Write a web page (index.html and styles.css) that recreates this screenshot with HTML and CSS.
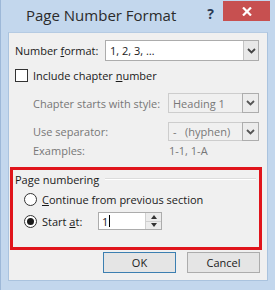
FILE: index.html
```html
<!DOCTYPE html>
<html lang="en">
<head>
    <meta charset="UTF-8">
    <meta name="viewport" content="width=device-width, initial-scale=1.0">
    <title>Page Number Format</title>
    <link rel="stylesheet" href="styles.css">
</head>
<body>
    <div class="window">
        <div class="titlebar">
            <span class="title">Page Number Format</span>
            <span class="help">?</span>
            <span class="close">
                <svg width="10" height="9" viewBox="0 0 10 9"><path d="M1 0.5 L9 8.5 M9 0.5 L1 8.5" stroke="#fff" stroke-width="2.2"/></svg>
            </span>
        </div>
        <div class="dialog">
            <div class="row row-format">
                <span class="label label-format">Number <u>f</u>ormat:</span>
                <div class="combo">
                    <span class="combo-value">1, 2, 3, …</span>
                    <span class="combo-btn">
                        <svg width="9" height="6" viewBox="0 0 9 6"><path d="M1 1 L4.5 4.5 L8 1" stroke="#444" stroke-width="1.8" fill="none"/></svg>
                    </span>
                </div>
            </div>

            <div class="row row-check">
                <span class="checkbox"></span>
                <span>Include chapter <u>n</u>umber</span>
            </div>

            <div class="row row-sub row-chapter">
                <span class="label label-sub">Chapter starts with style:</span>
                <div class="combo combo-disabled">
                    <span class="combo-value">Heading 1</span>
                    <span class="combo-btn">
                        <svg width="9" height="6" viewBox="0 0 9 6"><path d="M1 1 L4.5 4.5 L8 1" stroke="#555" stroke-width="1.8" fill="none"/></svg>
                    </span>
                </div>
            </div>

            <div class="row row-sub row-sep">
                <span class="label label-sub">Use separator:</span>
                <div class="combo combo-disabled">
                    <span class="combo-value">-&nbsp;&nbsp;&nbsp;(hyphen)</span>
                    <span class="combo-btn">
                        <svg width="9" height="6" viewBox="0 0 9 6"><path d="M1 1 L4.5 4.5 L8 1" stroke="#555" stroke-width="1.8" fill="none"/></svg>
                    </span>
                </div>
            </div>

            <div class="row row-sub row-examples">
                <span class="label label-sub">Examples:</span>
                <span class="muted">1-1, 1-A</span>
            </div>

            <div class="group">
                <div class="legend">
                    <span>Page numbering</span>
                    <span class="legend-line"></span>
                </div>
                <div class="radio-row">
                    <span class="radio"></span>
                    <span><u>C</u>ontinue from previous section</span>
                </div>
                <div class="radio-row">
                    <span class="radio radio-on"><span class="dot"></span></span>
                    <span class="radio-label">Start <u>a</u>t:</span>
                    <div class="spin">
                        <span class="spin-value">1<span class="caret"></span></span>
                        <span class="spin-btns">
                            <span class="spin-up"></span>
                            <span class="spin-down"></span>
                        </span>
                    </div>
                </div>
            </div>

            <div class="buttons">
                <button class="btn btn-default">OK</button>
                <button class="btn">Cancel</button>
            </div>
        </div>
    </div>
</body>
</html>
```

FILE: styles.css
```css
/* dialog window */
body {
    margin: 0;
    padding: 0;
    font-family: "Open Sans", "Noto Sans", sans-serif;
    font-size: 11px;
    color: #1a1a1a;
}

.window {
    width: 275px;
    height: 290px;
    box-sizing: border-box;
    background-color: #c3d7ed;
    border-left: 1px solid #9db8d8;
    display: flex;
    flex-direction: column;
}

u {
    text-decoration: underline;
    text-underline-offset: 1px;
}

/* title bar */
.titlebar {
    height: 32px;
    display: flex;
    align-items: flex-start;
    position: relative;
}

.title {
    margin-left: 25px;
    margin-top: 5px;
    font-size: 15px;
    color: #2b2b2b;
}

.help {
    margin-left: auto;
    margin-top: 4px;
    font-size: 14px;
    font-weight: bold;
    color: #2a3b55;
}

.close {
    width: 47px;
    height: 20px;
    margin-left: 9px;
    margin-top: 1px;
    margin-right: 5px;
    background-color: #c75050;
    display: flex;
    align-items: center;
    justify-content: center;
}

/* dialog body */
.dialog {
    margin: 0 7px 9px 7px;
    flex: 1;
    background-color: #f0f0f0;
    border: 1px solid #aac3de;
    border-top-color: #b5cbe3;
    display: flex;
    flex-direction: column;
}

.row {
    display: flex;
    align-items: center;
    padding: 0 8px 0 6px;
}

.row-format {
    margin-top: 7px;
    height: 21px;
}

.label-format {
    width: 90px;
}

.row-check {
    margin-top: 6px;
    height: 17px;
    gap: 5px;
}

.row-sub {
    padding-left: 24px;
}

.label-sub {
    width: 136px;
    color: #777;
}

.muted {
    color: #777;
}

.row-chapter {
    margin-top: 9px;
    height: 20px;
}

.row-sep {
    margin-top: 9px;
    height: 19px;
}

.row-examples {
    height: 18px;
}

/* combo boxes */
.combo {
    flex: 1;
    height: 100%;
    box-sizing: border-box;
    border: 1px solid #acacac;
    background-color: #fff;
    display: flex;
    align-items: center;
}

.combo-value {
    flex: 1;
    padding-left: 4px;
}

.combo-btn {
    width: 15px;
    height: 100%;
    box-sizing: border-box;
    background-color: #e8e8e8;
    border-left: 1px solid #c4c4c4;
    display: flex;
    align-items: center;
    justify-content: center;
}

.combo-disabled {
    flex: none;
    width: 91px;
    background-color: #f0f0f0;
    border-color: #cdcdcd;
    color: #777;
}

.combo-disabled .combo-btn {
    border: 1px solid #adadad;
    margin-right: -1px;
    height: calc(100% + 2px);
    width: 17px;
    background-color: #ececec;
}

.checkbox {
    width: 13px;
    height: 13px;
    box-sizing: border-box;
    border: 1px solid #333;
    background-color: #fff;
}

/* page numbering group (highlighted) */
.group {
    margin: 8px 5px 0 1px;
    height: 83px;
    box-sizing: border-box;
    border: 3px solid #e0141b;
    padding: 1px 3px 0 2px;
    display: flex;
    flex-direction: column;
}

.legend {
    height: 16px;
    display: flex;
    align-items: center;
    gap: 6px;
}

.legend-line {
    flex: 1;
    height: 1px;
    background-color: #dcdcdc;
    border-bottom: 1px solid #fff;
}

.radio-row {
    margin-top: 2px;
    height: 20px;
    padding-left: 9px;
    display: flex;
    align-items: center;
    gap: 5px;
}

.radio {
    width: 13px;
    height: 13px;
    box-sizing: border-box;
    border: 1px solid #333;
    border-radius: 50%;
    background-color: #fff;
    display: flex;
    align-items: center;
    justify-content: center;
}

.dot {
    width: 7px;
    height: 7px;
    border-radius: 50%;
    background-color: #1a1a1a;
}

.radio-label {
    width: 51px;
}

.spin {
    width: 64px;
    height: 18px;
    box-sizing: border-box;
    border: 1px solid #acacac;
    background-color: #fff;
    display: flex;
}

.spin-value {
    flex: 1;
    padding-left: 3px;
    display: flex;
    align-items: center;
}

.caret {
    width: 1px;
    height: 12px;
    background-color: #000;
    margin-left: 1px;
}

.spin-btns {
    width: 15px;
    display: flex;
    flex-direction: column;
    border-left: 1px solid #d0d0d0;
}

.spin-up, .spin-down {
    flex: 1;
    background-color: #ececec;
    display: flex;
    align-items: center;
    justify-content: center;
}

.spin-up {
    border-bottom: 1px solid #d0d0d0;
}

.spin-up::after {
    content: "";
    border-left: 3px solid transparent;
    border-right: 3px solid transparent;
    border-bottom: 4px solid #333;
}

.spin-down::after {
    content: "";
    border-left: 3px solid transparent;
    border-right: 3px solid transparent;
    border-top: 4px solid #333;
}

/* buttons */
.buttons {
    margin-top: 2px;
    display: flex;
    justify-content: flex-end;
    gap: 11px;
    padding-right: 7px;
}

.btn {
    width: 73px;
    height: 21px;
    font-family: "Open Sans", "Noto Sans", sans-serif;
    font-size: 11px;
    color: #1a1a1a;
    background-color: #e5e5e5;
    border: 1px solid #acacac;
    padding: 0;
}

.btn-default {
    border-color: #3c7fb1;
    background-color: #e5e5e5;
}
```
